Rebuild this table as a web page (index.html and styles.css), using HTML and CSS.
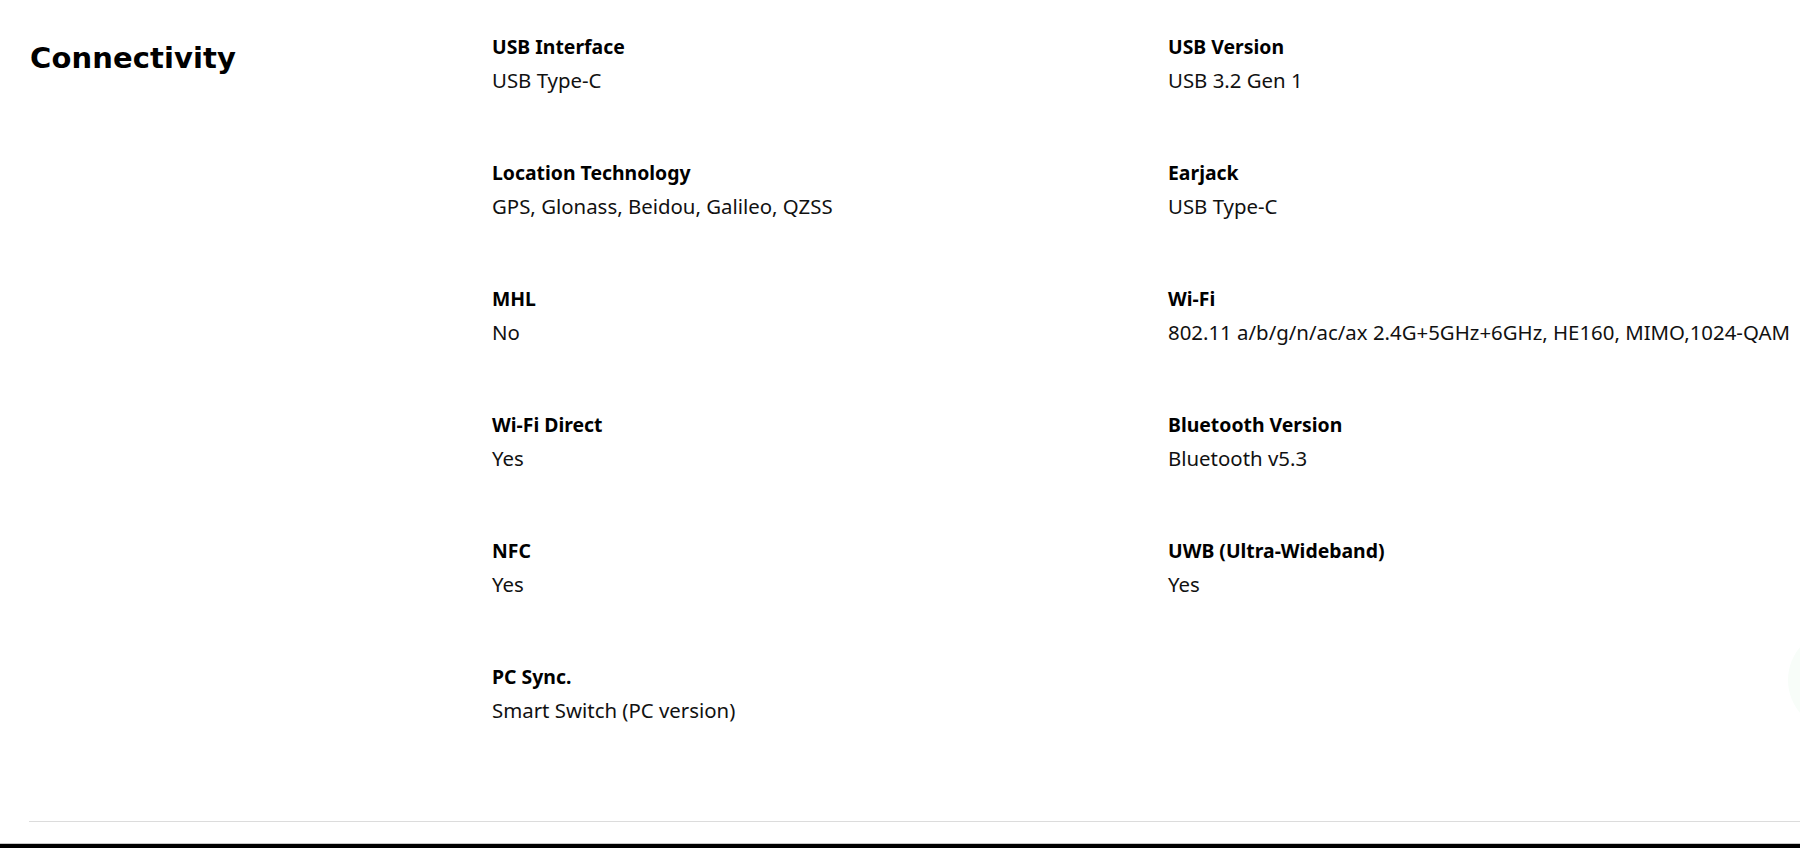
FILE: index.html
```html
<!DOCTYPE html>
<html lang="en">
<head>
<meta charset="utf-8">
<title>Connectivity</title>
<link rel="stylesheet" href="styles.css">
</head>
<body>
<main class="page">
  <section class="spec-section">
    <h2 class="spec-title">Connectivity</h2>
    <dl class="spec-list">
      <div class="spec-item"><dt class="spec-label">USB Interface</dt><dd class="spec-value">USB Type-C</dd></div>
      <div class="spec-item"><dt class="spec-label">USB Version</dt><dd class="spec-value">USB 3.2 Gen 1</dd></div>
      <div class="spec-item"><dt class="spec-label">Location Technology</dt><dd class="spec-value">GPS, Glonass, Beidou, Galileo, QZSS</dd></div>
      <div class="spec-item"><dt class="spec-label">Earjack</dt><dd class="spec-value">USB Type-C</dd></div>
      <div class="spec-item"><dt class="spec-label">MHL</dt><dd class="spec-value">No</dd></div>
      <div class="spec-item"><dt class="spec-label">Wi-Fi</dt><dd class="spec-value">802.11 a/b/g/n/ac/ax 2.4G+5GHz+6GHz, HE160, MIMO,1024-QAM</dd></div>
      <div class="spec-item"><dt class="spec-label">Wi-Fi Direct</dt><dd class="spec-value">Yes</dd></div>
      <div class="spec-item"><dt class="spec-label">Bluetooth Version</dt><dd class="spec-value">Bluetooth v5.3</dd></div>
      <div class="spec-item"><dt class="spec-label">NFC</dt><dd class="spec-value">Yes</dd></div>
      <div class="spec-item"><dt class="spec-label">UWB (Ultra-Wideband)</dt><dd class="spec-value">Yes</dd></div>
      <div class="spec-item"><dt class="spec-label">PC Sync.</dt><dd class="spec-value">Smart Switch (PC version)</dd></div>
    </dl>
  </section>
</main>
<footer class="footer"></footer>
<div class="float-btn"></div>
</body>
</html>
```

FILE: styles.css
```css
html, body {
  margin: 0;
  padding: 0;
  background: #fff;
  overflow: hidden;
}
body {
  height: 848px;
  font-family: "Noto Sans", "Open Sans", sans-serif;
  color: #000;
}
.page {
  padding-left: 29px;
}
.spec-section {
  display: grid;
  grid-template-columns: 463px 1fr;
  padding-top: 35px;
  border-bottom: 1px solid #dcdcdc;
  height: 822px;
  box-sizing: border-box;
}
.spec-title {
  margin: 0;
  padding-top: 3px;
  padding-left: 1px;
  font-family: "DejaVu Sans", sans-serif;
  font-weight: 700;
  font-size: 29px;
  line-height: 40px;
  letter-spacing: 0.1px;
}
.spec-list {
  margin: 0;
  display: grid;
  grid-template-columns: 676px 1fr;
  row-gap: 69px;
  align-content: start;
}
.spec-item {
  margin: 0;
}
.spec-label {
  font-weight: 700;
  font-size: 19.4px;
  line-height: 24px;
  margin-bottom: 9px;
}
.spec-value {
  margin: 0;
  font-weight: 400;
  font-size: 20.4px;
  line-height: 24px;
  color: #111;
}
.footer {
  margin-top: 21px;
  height: 40px;
  background: #000;
  border-top: 1px solid #c8c8c8;
}
.float-btn {
  position: fixed;
  left: 1788px;
  top: 629px;
  width: 102px;
  height: 102px;
  border-radius: 50%;
  background: #f8fdf9;
}
```
